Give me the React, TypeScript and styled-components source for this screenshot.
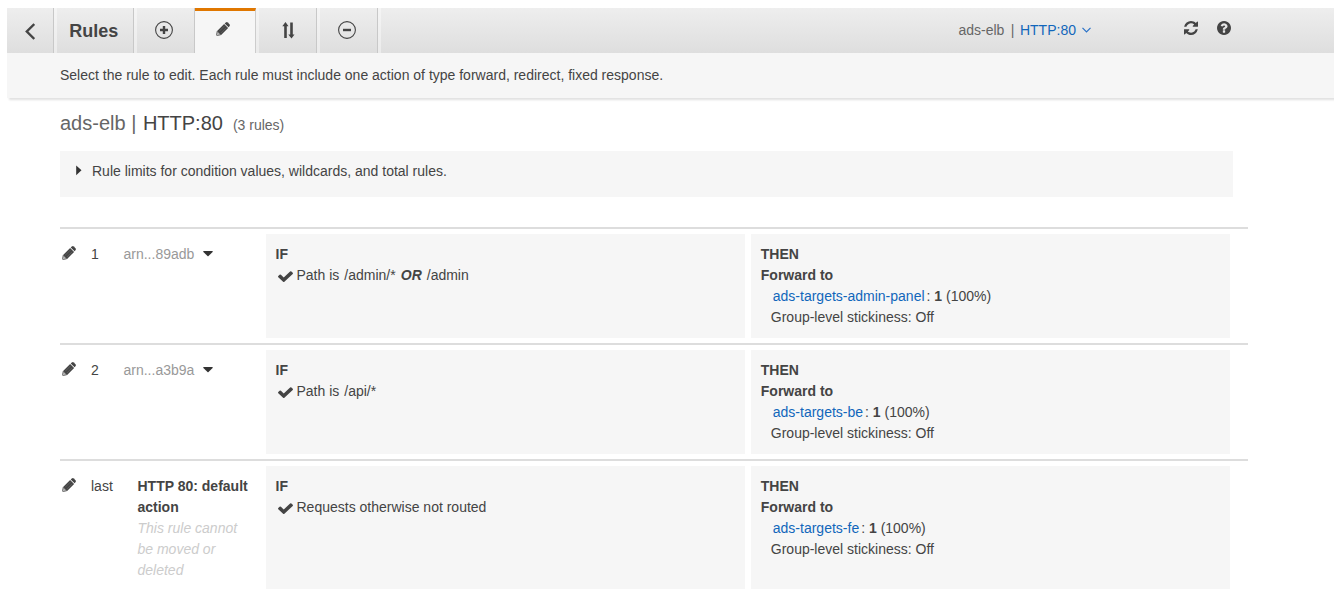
import React from "react";
import styled, { createGlobalStyle, css } from "styled-components";

const GlobalStyle = createGlobalStyle`
  * { box-sizing: border-box; }
  body {
    margin: 0;
    background: #fff;
    color: #444;
    font: 14px/21px "Liberation Sans", Arial, Helvetica, sans-serif;
    overflow: hidden;
  }
`;

const Page = styled.div`
  padding: 8px 0 0 7px;
`;

const Header = styled.header`
  background: #f6f6f6;
  box-shadow: 2px 2px 2px rgba(0, 0, 0, 0.12);
`;

const Toolbar = styled.nav`
  display: flex;
  height: 45px;
  background: linear-gradient(#eee, #dedede);
`;

const Tab = styled.button<{ $width: number; $active?: boolean; $shift?: number; $drop?: number }>`
  display: flex;
  align-items: center;
  justify-content: center;
  flex: none;
  width: ${(p) => p.$width}px;
  height: 45px;
  margin: 0 3px 0 0;
  padding: ${(p) => p.$drop ?? 0}px ${(p) => p.$shift ?? 0}px 1px 0;
  border: 0;
  border-right: 1px solid #c8c8c8;
  background: none;
  box-shadow: 3px 0 0 rgba(255, 255, 255, 0.4);
  color: #444;
  font: bold 18px/24px "Liberation Sans", Arial, sans-serif;
  ${(p) =>
    p.$active &&
    css`
      margin-left: -3px;
      background: #f6f6f6;
      border-top: 3px solid #e07700;
      border-right-color: #ccc;
      padding-bottom: 6px;
    `}
`;

const Target = styled.div`
  display: flex;
  align-items: center;
  gap: 6.5px;
  margin-left: 577.4px;
  padding-bottom: 1px;
  color: #666;
`;

const Listener = styled.a`
  display: flex;
  align-items: center;
  gap: 6px;
  margin-left: -1px;
  color: #1166bb;
`;

const Tools = styled.div`
  display: flex;
  gap: 19px;
  margin: 13px 0 0 92.8px;
  height: 14px;
`;

const Instruction = styled.p`
  margin: 0;
  height: 45px;
  padding: 12px 53px;
`;

const Main = styled.main`
  width: 1188px;
  margin-left: 53px;
`;

const Title = styled.h1`
  display: flex;
  align-items: baseline;
  margin: 0;
  padding-top: 10px;
  height: 53px;
  color: #666;
  font-size: 20px;
  font-weight: normal;
  line-height: 30px;
  white-space: pre;
`;

const TitlePort = styled.span`
  margin-left: 1px;
  color: #444;
`;

const RuleCount = styled.small`
  margin-left: 10px;
  font-size: 14px;
`;

const Limits = styled.section`
  display: flex;
  width: 1173px;
  height: 46px;
  margin-bottom: 30px;
  padding: 10px 16px;
  gap: 10px;
  background: #f6f6f6;
`;

const LimitsArrow = styled.svg`
  margin-top: 4px;
`;

const Row = styled.article<{ $height: number }>`
  display: grid;
  grid-template-columns: 31px 175px 479px 479px;
  width: 1188px;
  height: ${(p) => p.$height}px;
  padding: 5px 0;
  border-top: 2px solid #ddd;
`;

const EditCell = styled.div`
  padding: 11px 0 0 2px;
`;

const RuleLabel = styled.div`
  display: flex;
  padding-top: 10px;
`;

const Order = styled.div<{ $width: number }>`
  flex: none;
  width: ${(p) => p.$width}px;
`;

const Arn = styled.div`
  display: flex;
  align-items: center;
  gap: 8.5px;
  height: 21px;
  color: #999;
`;

const Caret = styled.svg`
  margin-bottom: 2px;
`;

const Note = styled.div`
  width: 110px;
  color: #ccc;
  font-style: italic;
`;

const Panel = styled.section`
  background: #f6f6f6;
  padding: 10px 10px 0 9.5px;

  & + & {
    margin-left: 6px;
    padding-left: 9.8px;
    width: 479px;
  }
`;

const Condition = styled.div`
  display: flex;
  white-space: pre;
`;

const CheckMark = styled.svg`
  margin: 6px 4px 0 2px;
`;

const PathValue = styled.span`
  margin-left: 1.1px;
`;

const Or = styled.b`
  margin: 0 5px 0 4px;
  font-style: italic;
`;

const Forward = styled.div`
  padding-left: 12px;
`;

const TargetLink = styled.a`
  margin-right: 2px;
  color: #1166bb;
`;

const Stickiness = styled.div`
  padding-left: 10px;
`;

const Pencil = () => (
  <svg width="14" height="14" viewBox="0 0 14 14">
    <path fill="#444" d="M8.7 1.4 9.9.4Q10.9-.2 11.8.5L13.5 2.2Q14.2 3.1 13.6 4L12.6 5.2Z" />
    <path fill="#444" d="M8.1 1.9 12.1 5.9 5.1 12.9 1.1 8.9Z" />
    <path fill="#bbb" stroke="#444" strokeWidth=".7" d="M1.2 9.3 .5 12.7Q.4 13.6 1.3 13.5L4.7 12.8Z" />
    <path d="M3.2 9.3 8.6 3.9M4.9 11 10.3 5.6" stroke="#777" strokeWidth=".5" />
  </svg>
);

const CirclePlusMinus = ({ plus }: { plus?: boolean }) => (
  <svg width="18" height="18" viewBox="0 0 18 18" fill="none" stroke="#444">
    <circle cx="9" cy="9" r="8.4" strokeWidth="1.1" />
    <path d={plus ? "M5 9h8M9 5v8" : "M5 9h8"} strokeWidth="2.4" />
  </svg>
);

type Rule = {
  order: string;
  arn?: string;
  paths?: string[];
  target: string;
};

const rules: Rule[] = [
  { order: "1", arn: "arn...89adb", paths: ["/admin/*", "/admin"], target: "ads-targets-admin-panel" },
  { order: "2", arn: "arn...a3b9a", paths: ["/api/*"], target: "ads-targets-be" },
  { order: "last", target: "ads-targets-fe" },
];

const RuleRow = ({ rule }: { rule: Rule }) => (
  <Row $height={rule.arn ? 116 : 135}>
    <EditCell>
      <Pencil />
    </EditCell>
    <RuleLabel>
      <Order $width={rule.arn ? 32.5 : 46.5}>{rule.order}</Order>
      {rule.arn ? (
        <Arn>
          {rule.arn}
          <Caret width="10" height="6" viewBox="0 0 10 6">
            <path d="M.6 0h8.8q.6.2.2.9L5.5 5q-.5.4-1 0L.4.9Q0 .2.6 0Z" fill="#333" />
          </Caret>
        </Arn>
      ) : (
        <div>
          <b>HTTP 80: default action</b>
          <Note>This rule cannot be moved or deleted</Note>
        </div>
      )}
    </RuleLabel>
    <Panel>
      <b>IF</b>
      <Condition>
        <CheckMark width="15" height="11" viewBox="121 310 1550 1212" preserveAspectRatio="none">
          <path
            fill="#444"
            d="M1671 566q0 40-28 68l-724 724-136 136q-28 28-68 28t-68-28l-136-136-362-362q-28-28-28-68t28-68l136-136q28-28 68-28t68 28l294 295 656-657q28-28 68-28t68 28l136 136q28 28 28 68z"
          />
        </CheckMark>
        {rule.paths ? (
          <span>
            Path is{" "}
            {rule.paths.map((path, i) => (
              <PathValue key={path}>
                {i > 0 && <Or>OR</Or>}
                {path}
              </PathValue>
            ))}
          </span>
        ) : (
          "Requests otherwise not routed"
        )}
      </Condition>
    </Panel>
    <Panel>
      <b>THEN</b>
      <div>
        <b>Forward to</b>
      </div>
      <Forward>
        <TargetLink>{rule.target}</TargetLink>: <b>1</b> (100%)
      </Forward>
      <Stickiness>Group-level stickiness: Off</Stickiness>
    </Panel>
  </Row>
);

export default function App() {
  return (
    <>
      <GlobalStyle />
      <Page>
        <Header>
          <Toolbar>
            <Tab $width={47} $drop={2} $shift={1}>
              <svg width="11" height="17" viewBox="-1 0 11 17" fill="none" stroke="#444" strokeWidth="2.4">
                <path d="M9.3 1 1.8 8.5 9.3 16" />
              </svg>
            </Tab>
            <Tab $width={77} $shift={2.6} $drop={2}>
              Rules
            </Tab>
            <Tab $width={58} $shift={3}>
              <CirclePlusMinus plus />
            </Tab>
            <Tab $width={61} $active $shift={4}>
              <Pencil />
            </Tab>
            <Tab $width={58}>
              <svg width="14" height="17" viewBox="-.5 0 14 17" fill="#444">
                <path d="M4 .1 7 4.2H5.3V16H2.7V4.2H.8ZM10 16.5 6.8 12.4H8.7V.6H11.3V12.4H13Z" />
              </svg>
            </Tab>
            <Tab $width={58} $shift={3}>
              <CirclePlusMinus />
            </Tab>
            <Target>
              <span>ads-elb</span>
              <span>|</span>
              <Listener>
                HTTP:80
                <svg width="9" height="6" viewBox="0 0 9 6" fill="none" stroke="#2a72c8" strokeWidth="1.2">
                  <path d="M.5.9 4.5 4.9 8.5.9" />
                </svg>
              </Listener>
            </Target>
            <Tools>
              <svg width="14" height="14" viewBox="0 128 1536 1536" fill="#444">
                <path d="M1511 1056q0 5-1 7-64 268-268 434.500t-478 166.500q-146 0-282.500-55t-243.500-157l-129 129q-19 19-45 19t-45-19-19-45v-448q0-26 19-45t45-19h448q26 0 45 19t19 45-19 45l-137 137q71 66 161 102t187 36q134 0 250-65t186-179q11-17 53-117 8-23 30-23h192q13 0 22.500 9.500t9.500 22.500zm25-800v448q0 26-19 45t-45 19h-448q-26 0-45-19t-19-45 19-45l138-138q-148-137-349-137-134 0-250 65t-186 179q-11 17-53 117-8 23-30 23h-199q-13 0-22.500-9.500t-9.500-22.500v-7q65-268 270-434.500t480-166.500q146 0 284 55.500t245 156.500l130-129q19-19 45-19t45 19 19 45z" />
              </svg>
              <svg width="14" height="14" viewBox="128 128 1536 1536" fill="#444">
                <path d="M1024 1376v-192q0-14-9-23t-23-9h-192q-14 0-23 9t-9 23v192q0 14 9 23t23 9h192q14 0 23-9t9-23zm256-672q0-88-55.500-163t-138.500-116-170-41q-243 0-371 213-15 24 8 42l132 100q7 6 19 6 16 0 25-12 53-68 86-92 34-24 86-24 48 0 85.500 26t37.500 59q0 38-20 61t-68 45q-63 28-115.500 86.500t-52.500 125.500v36q0 14 9 23t23 9h192q14 0 23-9t9-23q0-19 21.500-49.500t54.500-49.500q32-18 49-28.500t46-35 44.500-48 28-60.500 12.500-81zm384 192q0 209-103 385.500t-279.500 279.500-385.500 103-385.500-103-279.500-279.500-103-385.500 103-385.500 279.500-279.500 385.500-103 385.500 103 279.500 279.500 103 385.500z" />
              </svg>
            </Tools>
          </Toolbar>
          <Instruction>
            Select the rule to edit. Each rule must include one action of type forward, redirect, fixed response.
          </Instruction>
        </Header>
        <Main>
          <Title>
            ads-elb | <TitlePort>HTTP:80</TitlePort>
            <RuleCount>(3 rules)</RuleCount>
          </Title>
          <Limits>
            <LimitsArrow width="6" height="11" viewBox="0 0 6 11">
              <path d="M.2 .4 5.5 5.3 .2 10.2Z" fill="#333" />
            </LimitsArrow>
            Rule limits for condition values, wildcards, and total rules.
          </Limits>
          {rules.map((rule) => (
            <RuleRow key={rule.order} rule={rule} />
          ))}
        </Main>
      </Page>
    </>
  );
}
